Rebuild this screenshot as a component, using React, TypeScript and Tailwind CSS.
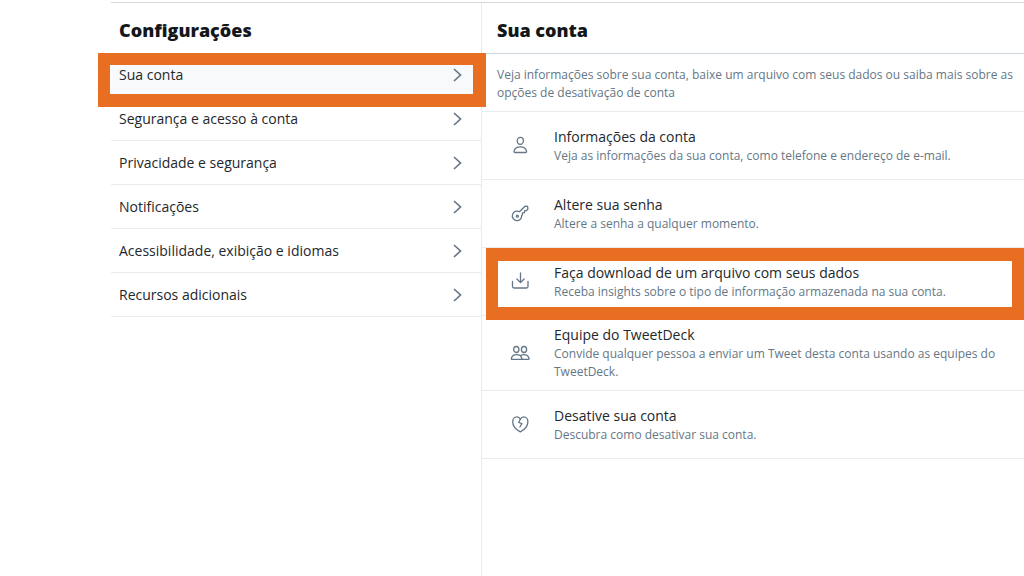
import type { ReactNode } from "react";

const menuItems = [
  "Sua conta",
  "Segurança e acesso à conta",
  "Privacidade e segurança",
  "Notificações",
  "Acessibilidade, exibição e idiomas",
  "Recursos adicionais",
];

function Icon({ children }: { children: ReactNode }) {
  return (
    <svg
      viewBox="0 0 20 20"
      className="h-5 w-5 shrink-0 text-[#657786]"
      fill="none"
      stroke="currentColor"
      strokeWidth="1.3"
      strokeLinecap="round"
      strokeLinejoin="round"
      aria-hidden="true"
    >
      {children}
    </svg>
  );
}

const accountItems = [
  {
    title: "Informações da conta",
    description:
      "Veja as informações da sua conta, como telefone e endereço de e-mail.",
    icon: (
      <Icon>
        <ellipse cx="10.3" cy="4.8" rx="3.1" ry="3.5" />
        <path d="M5 16.500h10.600c.7 0 1.100-.6 1-1.200-.6-2.900-2.900-4.500-6.300-4.500S4.600 12.400 4 15.300c-.1.600.3 1.200 1 1.200z" />
      </Icon>
    ),
  },
  {
    title: "Altere sua senha",
    description: "Altere a senha a qualquer momento.",
    icon: (
      <Icon>
        <path d="M9.400 7.800 15 2.200l2.600.1.300 2.700-1.400 1.600-1.900.1-.2 2-1.900.2-.1 1.800-.7.700a4.700 4.700 0 1 1-2.300-3.600z" />
        <circle cx="7.400" cy="12.200" r="1" />
      </Icon>
    ),
  },
  {
    title: "Faça download de um arquivo com seus dados",
    description:
      "Receba insights sobre o tipo de informação armazenada na sua conta.",
    highlighted: true,
    icon: (
      <Icon>
        <path d="M10.500 1v9.500M6.900 7l3.600 3.600L14.100 7" />
        <path d="M2.500 9.500v5c0 .9.600 1.500 1.500 1.500h12.500c.9 0 1.500-.6 1.500-1.500v-5" />
      </Icon>
    ),
  },
  {
    title: "Equipe do TweetDeck",
    description:
      "Convide qualquer pessoa a enviar um Tweet desta conta usando as equipes do TweetDeck.",
    icon: (
      <Icon>
        <ellipse cx="6.300" cy="6.500" rx="2.600" ry="3" />
        <ellipse cx="14" cy="6.500" rx="2.600" ry="3" />
        <path d="M2 16.400h9.200c.5 0 .8-.4.700-.9-.6-2.500-2.400-3.900-5.300-3.900s-4.700 1.400-5.300 3.900c-.1.500.200.900.700.900z" />
        <path d="M10.600 12.500c.9-.6 2-.9 3.200-.9 2.900 0 4.700 1.400 5.300 3.900.1.500-.2.900-.7.900h-7" />
      </Icon>
    ),
  },
  {
    title: "Desative sua conta",
    description: "Descubra como desativar sua conta.",
    icon: (
      <Icon>
        <path d="M10.300 16.900C6 14.500 2.700 11 2.700 6.700c0-2.700 1.800-4.800 4.200-4.800 1.500 0 2.700.8 3.400 2.300.7-1.500 2-2.300 3.500-2.300 2.300 0 4.100 2.100 4.100 4.800 0 4.300-3.300 7.800-7.600 10.200z" />
        <path d="M10.300 4.200 8.700 7.500l3.200 1.200-2 3.300" />
      </Icon>
    ),
  },
];

function Chevron() {
  return (
    <svg
      viewBox="0 0 20 20"
      className="h-5 w-5 text-[#657786]"
      fill="none"
      stroke="currentColor"
      strokeWidth="1.7"
      aria-hidden="true"
    >
      <path d="m7 4 6.500 6L7 16" />
    </svg>
  );
}

export default function App() {
  return (
    <div className="min-h-screen bg-white pt-0.5 pl-[111px] font-['Open_Sans',sans-serif] text-[#14171a]">
      <div className="flex min-h-[calc(100vh-2px)] border-t border-[#d5d9dc]">
        <section className="w-[371px] shrink-0 border-r border-[#e6ecf0]">
          <h1 className="flex h-[50px] items-center px-2 pt-1 text-lg font-extrabold">
            Configurações
          </h1>
          <nav>
            {menuItems.map((item, index) => (
              <a
                key={item}
                href="#"
                className={`relative flex h-11 items-center justify-between border-b border-[#e6ecf0] pr-3.5 pl-2 text-sm text-[#24282c] ${
                  index === 0 ? "bg-[#f7f9fa]" : ""
                }`}
              >
                {item}
                <Chevron />
                {index === 0 && (
                  <span className="absolute top-0 -right-[5px] -left-[13px] h-[54px] border-12 border-r-13 border-b-13 border-[#e86f22]" />
                )}
              </a>
            ))}
          </nav>
        </section>

        <main className="min-w-0 flex-1">
          <h2 className="flex h-[51px] items-center border-b border-[#ccd6dd] px-[15px] pt-1 text-lg font-extrabold">
            Sua conta
          </h2>
          <p className="border-b border-[#e6ecf0] pt-3 pr-2 pb-[9px] pl-[15px] text-xs leading-[18px] text-[#657786]">
            Veja informações sobre sua conta, baixe um arquivo com seus dados ou
            saiba mais sobre as opções de desativação de conta
          </p>
          {accountItems.map((item) => (
            <a
              key={item.title}
              href="#"
              className="relative flex min-h-[68px] items-center gap-6 border-b border-[#e6ecf0] py-[9px] pr-6 pl-7"
            >
              {item.icon}
              <span>
                <span className="block text-sm leading-5 text-[#24282c]">
                  {item.title}
                </span>
                <span className="block text-xs leading-[18px] text-[#657786]">
                  {item.description}
                </span>
              </span>
              {item.highlighted && (
                <span className="absolute top-0 right-0 left-1 h-[72px] border-12 border-t-13 border-b-13 border-[#e86f22]" />
              )}
            </a>
          ))}
        </main>
      </div>
    </div>
  );
}
